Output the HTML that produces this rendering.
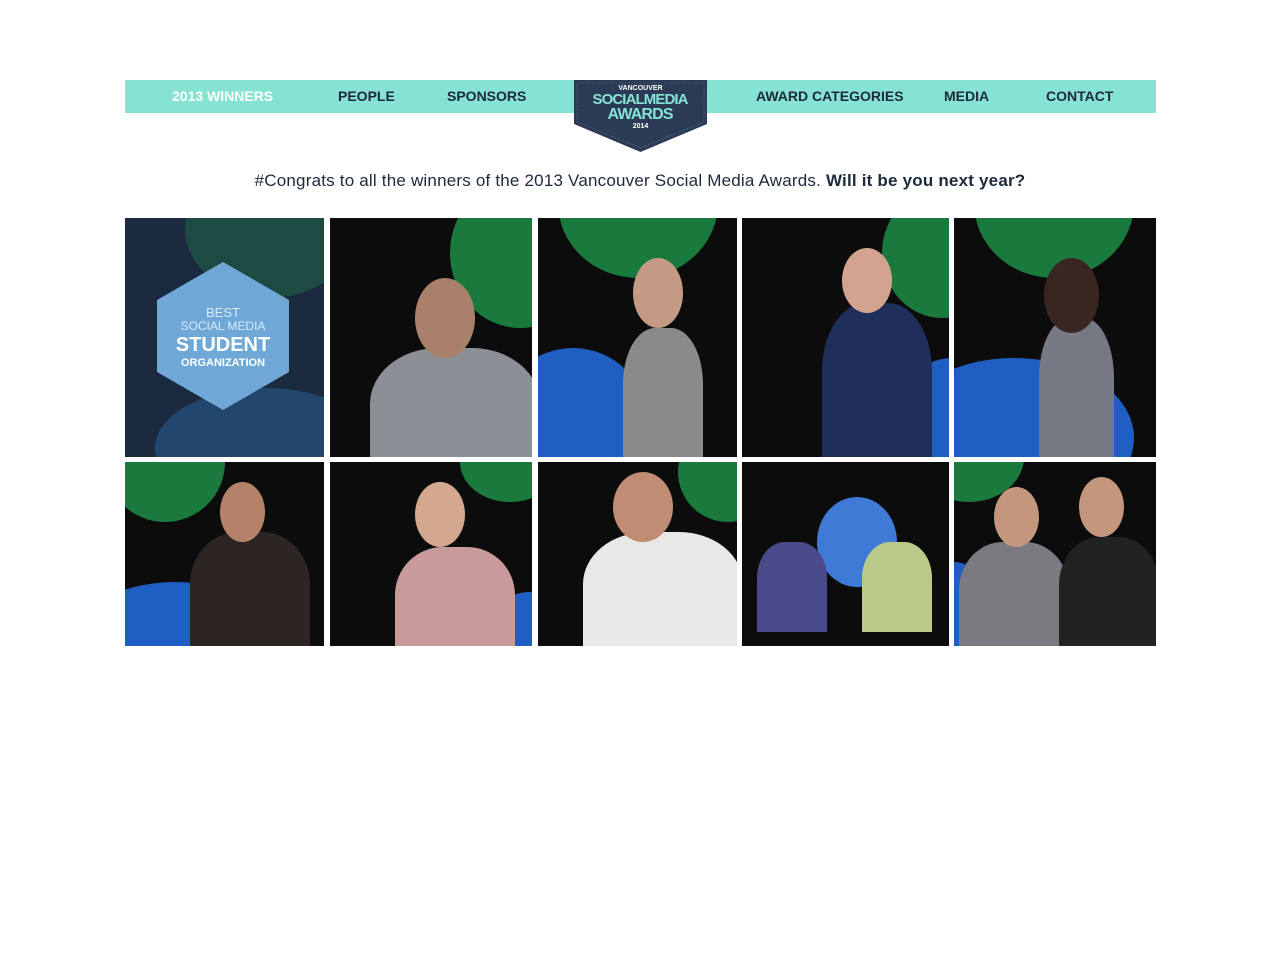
<!DOCTYPE html>
<html><head><meta charset="utf-8"><style>
body{margin:0;background:#fff;font-family:"Liberation Sans",sans-serif;}
.nav{position:absolute;left:125px;top:80px;width:1031px;height:33px;background:#86e2d3;}
.nav span{position:absolute;top:8px;font-size:14px;font-weight:bold;color:#1d2a3c;}
.logo{position:absolute;left:574px;top:80px;width:133px;height:72px}
.msg{position:absolute;top:171px;left:0;width:1280px;text-align:center;font-size:17px;color:#1d2a3c;letter-spacing:.2px}
.t{position:absolute;overflow:hidden;background:#0c0c0c}
.t i{position:absolute;border-radius:50%;display:block}
</style></head><body>
<div class="nav">
<span style="left:47px;color:#fff">2013 WINNERS</span>
<span style="left:213px">PEOPLE</span>
<span style="left:322px">SPONSORS</span>
<span style="left:631px">AWARD CATEGORIES</span>
<span style="left:819px">MEDIA</span>
<span style="left:921px">CONTACT</span>
</div>
<svg class="logo" viewBox="0 0 133 72">
<path d="M0 0H133V44L66.5 72L0 44Z" fill="#2b3a55"/>
<path d="M3 3H130V42L66.5 68L3 42Z" fill="none" stroke="#6c7a90" stroke-width=".6" stroke-dasharray="1.5 1.5"/>
<text x="66.5" y="10" font-size="7" font-weight="bold" fill="#fff" text-anchor="middle" font-family="Liberation Sans">VANCOUVER</text>
<text x="66.5" y="24" font-size="15" font-weight="bold" fill="#86e2d3" text-anchor="middle" font-family="Liberation Sans" textLength="96">SOCIALMEDIA</text>
<text x="66.5" y="39" font-size="16" font-weight="bold" fill="#86e2d3" text-anchor="middle" font-family="Liberation Sans" textLength="66">AWARDS</text>
<text x="66.5" y="48" font-size="7" font-weight="bold" fill="#fff" text-anchor="middle" font-family="Liberation Sans">2014</text>
</svg>
<div class="msg">#Congrats to all the winners of the 2013 Vancouver Social Media Awards. <b>Will it be you next year?</b></div>

<div class="t" style="left:125px;top:218px;width:199px;height:239px;background:#1c2a40">
<i style="left:60px;top:-60px;width:170px;height:140px;background:#1e4a44"></i>
<i style="left:30px;top:170px;width:220px;height:120px;background:#22466e"></i>
<svg style="position:absolute;left:30px;top:42px" width="136" height="152" viewBox="0 0 136 152"><path d="M68 2L134 40V112L68 150L2 112V40Z" fill="#6fa8d6"/>
<text x="68" y="57" font-size="13" fill="#d8ecfa" text-anchor="middle" font-family="Liberation Sans">BEST</text>
<text x="68" y="70" font-size="12" fill="#d8ecfa" text-anchor="middle" font-family="Liberation Sans">SOCIAL MEDIA</text>
<text x="68" y="91" font-size="20" font-weight="bold" fill="#fff" text-anchor="middle" font-family="Liberation Sans">STUDENT</text>
<text x="68" y="106" font-size="11" font-weight="bold" fill="#fff" text-anchor="middle" font-family="Liberation Sans">ORGANIZATION</text></svg>
</div>
<div class="t" style="left:330px;top:218px;width:202px;height:239px"><i style="left:120px;top:-40px;width:140px;height:150px;background:#1a7a3e"></i><i style="left:40px;top:130px;width:170px;height:140px;background:#8d8f96;border-radius:40% 40% 0 0"></i><i style="left:85px;top:60px;width:60px;height:80px;background:#a9806a"></i></div>
<div class="t" style="left:538px;top:218px;width:199px;height:239px"><i style="left:20px;top:-90px;width:160px;height:150px;background:#1a7a3e"></i><i style="left:-40px;top:130px;width:150px;height:150px;background:#1f5fc4"></i><i style="left:85px;top:110px;width:80px;height:140px;background:#8a8a88;border-radius:40% 40% 0 0"></i><i style="left:95px;top:40px;width:50px;height:70px;background:#c49a84"></i></div>
<div class="t" style="left:742px;top:218px;width:207px;height:239px"><i style="left:140px;top:-30px;width:120px;height:130px;background:#1a7a3e"></i><i style="left:150px;top:140px;width:120px;height:140px;background:#1f5fc4"></i><i style="left:80px;top:85px;width:110px;height:170px;background:#1f2e5a;border-radius:40% 40% 0 0"></i><i style="left:100px;top:30px;width:50px;height:65px;background:#d2a490"></i></div>
<div class="t" style="left:954px;top:218px;width:202px;height:239px"><i style="left:20px;top:-90px;width:160px;height:150px;background:#1a7a3e"></i><i style="left:-60px;top:140px;width:240px;height:160px;background:#1f5fc4"></i><i style="left:85px;top:100px;width:75px;height:150px;background:#767884;border-radius:40% 40% 0 0"></i><i style="left:90px;top:40px;width:55px;height:75px;background:#3a2620"></i></div>

<div class="t" style="left:125px;top:462px;width:199px;height:184px"><i style="left:-20px;top:-60px;width:120px;height:120px;background:#1a7a3e"></i><i style="left:-60px;top:120px;width:220px;height:140px;background:#1f5fc4"></i><i style="left:65px;top:70px;width:120px;height:130px;background:#2c2523;border-radius:40% 40% 0 0"></i><i style="left:95px;top:20px;width:45px;height:60px;background:#b48269"></i></div>
<div class="t" style="left:330px;top:462px;width:202px;height:184px"><i style="left:130px;top:-40px;width:100px;height:80px;background:#1a7a3e"></i><i style="left:150px;top:130px;width:100px;height:100px;background:#1f5fc4"></i><i style="left:65px;top:85px;width:120px;height:120px;background:#c89a9a;border-radius:40% 40% 0 0"></i><i style="left:85px;top:20px;width:50px;height:65px;background:#d4a890"></i></div>
<div class="t" style="left:538px;top:462px;width:199px;height:184px"><i style="left:140px;top:-40px;width:100px;height:100px;background:#1a7a3e"></i><i style="left:45px;top:70px;width:160px;height:130px;background:#e8e8e6;border-radius:40% 40% 0 0"></i><i style="left:75px;top:10px;width:60px;height:70px;background:#c08c74"></i></div>
<div class="t" style="left:742px;top:462px;width:207px;height:184px"><i style="left:75px;top:35px;width:80px;height:90px;background:#3f7ad6"></i><i style="left:15px;top:80px;width:70px;height:90px;background:#4a4a8a;border-radius:40% 40% 0 0"></i><i style="left:120px;top:80px;width:70px;height:90px;background:#b8c98a;border-radius:40% 40% 0 0"></i></div>
<div class="t" style="left:954px;top:462px;width:202px;height:184px"><i style="left:-40px;top:-50px;width:110px;height:90px;background:#1a7a3e"></i><i style="left:-40px;top:100px;width:80px;height:120px;background:#1f5fc4"></i><i style="left:5px;top:80px;width:110px;height:120px;background:#7a7a80;border-radius:40% 40% 0 0"></i><i style="left:105px;top:75px;width:100px;height:120px;background:#222;border-radius:40% 40% 0 0"></i><i style="left:40px;top:25px;width:45px;height:60px;background:#c4967e"></i><i style="left:125px;top:15px;width:45px;height:60px;background:#c4967e"></i></div>
</body></html>
